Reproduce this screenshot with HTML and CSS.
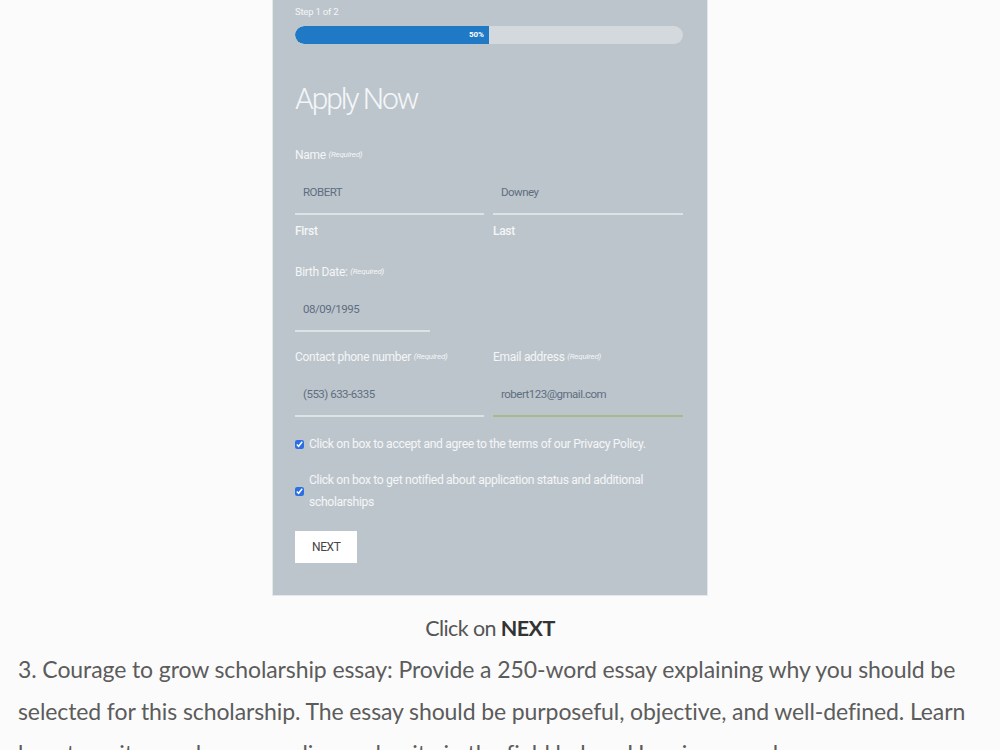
FILE: index.html
```html
<!DOCTYPE html>
<html lang="en">
<head>
  <meta charset="UTF-8" />
  <meta name="viewport" content="width=device-width, initial-scale=1.0"/>
  <title>Courage to Grow Scholarship</title>
  <link rel="stylesheet" href="styles.css">
</head>
<body>
  <div class="wrap">
    <div class="card">
      <div class="step">Step 1 of 2</div>
      <div class="progress"><div class="bar" style="width:50%">50%</div></div>
      <h1>Apply Now</h1>

      <div class="label">Name <em>(Required)</em></div>
      <div class="row">
        <div>
          <input type="text" value="ROBERT" />
          <div class="sub">First</div>
        </div>
        <div>
          <input type="text" value="Downey" />
          <div class="sub">Last</div>
        </div>
      </div>

      <div class="label gap-date">Birth Date: <em>(Required)</em></div>
      <input type="text" class="short" value="08/09/1995" />

      <div class="row">
        <div>
          <div class="label gap-contact">Contact phone number <em>(Required)</em></div>
          <input type="text" value="(553) 633-6335" />
        </div>
        <div>
          <div class="label gap-contact">Email address <em>(Required)</em></div>
          <input type="text" class="active" value="robert123@gmail.com" />
        </div>
      </div>

      <label class="check first"><input type="checkbox" checked /> <span>Click on box to accept and agree to the terms of our Privacy Policy.</span></label>
      <label class="check"><input type="checkbox" checked /> <span>Click on box to get notified about application status and additional scholarships</span></label>

      <button>NEXT</button>
    </div>

    <p class="center">Click on <b>NEXT</b></p>
    <p class="text">3. Courage to grow scholarship essay: Provide a 250-word essay explaining why you should be selected for this scholarship. The essay should be purposeful, objective, and well-defined. Learn how to write good essays online and write in the field below. Here is a sample essay.</p>
  </div>
</body>
</html>
```

FILE: styles.css
```css
body { margin:0; background:#fbfbfb; font-family:Lato, "Open Sans", sans-serif; color:#5c5c5c;}
.wrap { width:944px; margin-left:18px;}

/* form card */
.card { width:434px; margin:0 auto; box-sizing:border-box; background:#bdc5cc; padding:4px 21px 32px 22px; font-family:Roboto, sans-serif; color:#f4f6f7; box-shadow:0 0 0 1px #e4e8eb;}
.step { font-size:9.5px; line-height:16px; letter-spacing:-0.2px;}
.progress { margin-top:6px; height:18px; width:388px; background:#d4d9dd; border-radius:9px; overflow:hidden;}
.bar { height:100%; background:#1f79c5; border-radius:9px 0 0 9px; color:#fff; font-size:8px; font-weight:bold; line-height:18px; text-align:right; padding-right:5px; box-sizing:border-box;}
h1 { margin:35px 0 0; font-weight:300; font-size:30px; line-height:40px; letter-spacing:-2.1px;}

.label { margin-top:26px; height:20px; font-size:12px; line-height:20px; letter-spacing:-0.3px;}
.label em { font-size:8px; letter-spacing:-0.2px; vertical-align:top;}
.gap-date { margin-top:23px;}
.gap-contact { margin-top:15px;}
.row { display:grid; grid-template-columns:189px 190px; gap:9px;}

input[type=text] { display:block; width:100%; height:50px; box-sizing:border-box; padding:5px 8px 0; border:none; border-bottom:2px solid #dde2e5; background:transparent; font-family:Roboto, sans-serif; font-size:11.5px; letter-spacing:-0.5px; color:#5e6e80; outline:none;}
input.short { width:135px;}
input.active { border-bottom-color:#a7b98d;}
.sub { margin-top:8px; height:16px; font-size:12px; font-weight:500; line-height:16px; letter-spacing:-0.3px;}

.check { display:flex; align-items:center; gap:5px; margin-top:14px; font-size:12.2px; line-height:22px; letter-spacing:-0.35px;}
.check.first { margin-top:16px;}
.check input { margin:0; width:9px; height:9px; flex:none; accent-color:#2c6fe0;}

button { margin-top:18px; height:32px; padding:0 17px; background:#fff; border:none; font-family:Roboto, sans-serif; font-size:12px; color:#444; letter-spacing:-0.4px;}

/* text under the form */
p { margin:0;}
.center { margin-top:13px; text-align:center; font-size:21.5px; line-height:40px; letter-spacing:-0.6px; color:#555;}
.center b { color:#333;}
.text { width:962px; font-size:23px; line-height:42px; letter-spacing:-0.1px;}
```
